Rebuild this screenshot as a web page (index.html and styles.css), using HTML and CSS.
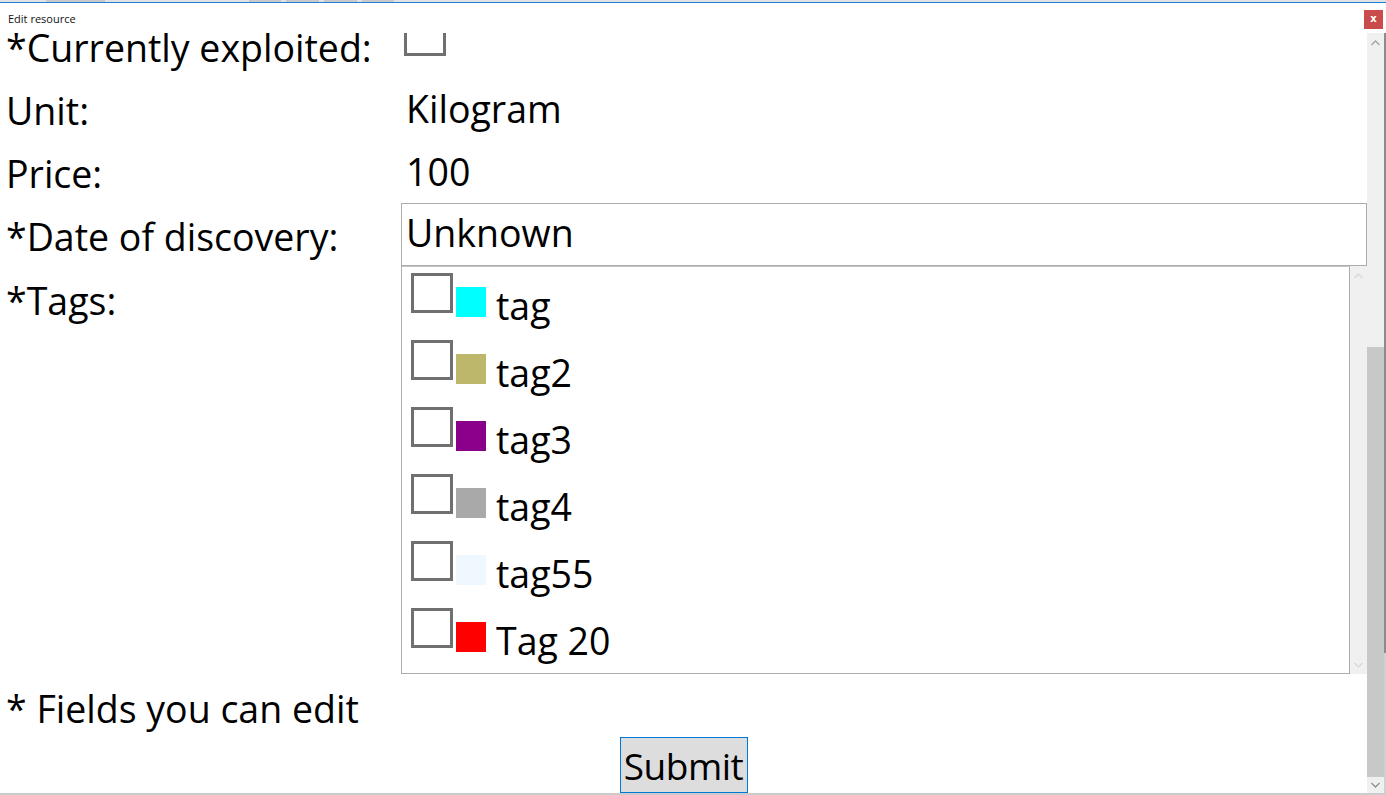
FILE: index.html
```html
<!DOCTYPE html>
<html>
<head>
<meta charset="utf-8">
<title>Edit resource</title>
<link rel="stylesheet" href="styles.css">
</head>
<body>
<div class="window">
  <div class="topstrip"></div>
  <div class="accent"></div>
  <div class="titlebar">
    <span class="title">Edit resource</span>
    <span class="close">x</span>
  </div>
  <div class="body">
    <div class="viewport">
      <div class="form">
        <div class="label row-exploited">*Currently exploited:</div>
        <div class="value row-exploited"><span class="check check-main"></span></div>

        <div class="label row-std">Unit:</div>
        <div class="value row-std text-value">Kilogram</div>

        <div class="label row-std">Price:</div>
        <div class="value row-std text-value">100</div>

        <div class="label row-date">*Date of discovery:</div>
        <div class="value row-date"><div class="textbox">Unknown</div></div>

        <div class="label row-tags tags-label">*Tags:</div>
        <div class="value row-tags">
          <div class="listbox">
            <div class="listpanel">
              <div class="tag"><span class="check"></span><span class="swatch sw-cyan"></span><span class="tagname">tag</span></div>
              <div class="tag"><span class="check"></span><span class="swatch sw-khaki"></span><span class="tagname">tag2</span></div>
              <div class="tag"><span class="check"></span><span class="swatch sw-magenta"></span><span class="tagname">tag3</span></div>
              <div class="tag"><span class="check"></span><span class="swatch sw-gray"></span><span class="tagname">tag4</span></div>
              <div class="tag"><span class="check"></span><span class="swatch sw-alice"></span><span class="tagname">tag55</span></div>
              <div class="tag"><span class="check"></span><span class="swatch sw-red"></span><span class="tagname">Tag 20</span></div>
            </div>
            <div class="innerscroll">
              <svg class="chev" width="9" height="6" viewBox="0 0 9 6"><polyline points="0.5,5 4.5,1 8.5,5" fill="none" stroke="#d6d6d6" stroke-width="1.2"/></svg>
              <svg class="chev" width="9" height="6" viewBox="0 0 9 6"><polyline points="0.5,1 4.5,5 8.5,1" fill="none" stroke="#d6d6d6" stroke-width="1.2"/></svg>
            </div>
          </div>
        </div>

        <div class="fields">* Fields you can edit</div>
        <div class="submitrow"><button class="submit">Submit</button></div>
      </div>
    </div>
    <div class="scrollbar">
      <div class="sb-btn sb-up">
        <svg width="9" height="6" viewBox="0 0 9 6"><polyline points="0.5,5 4.5,1 8.5,5" fill="none" stroke="#a3a3a3" stroke-width="1.3"/></svg>
      </div>
      <div class="sb-track"><div class="sb-thumb"></div></div>
      <div class="sb-btn sb-down">
        <svg width="9" height="6" viewBox="0 0 9 6"><polyline points="0.5,1 4.5,5 8.5,1" fill="none" stroke="#8f8f8f" stroke-width="1.3"/></svg>
      </div>
    </div>
    <div class="edge"></div>
  </div>
  <div class="bottomline"></div>
</div>
</body>
</html>
```
FILE: styles.css
```css
html, body {
  margin: 0;
  padding: 0;
  background: #ffffff;
}

body {
  width: 1386px;
  height: 795px;
  overflow: hidden;
  font-family: "Open Sans", "Noto Sans", sans-serif;
  color: #000000;
}

.window {
  display: flex;
  flex-direction: column;
  width: 1386px;
  height: 795px;
}

.topstrip {
  height: 2px;
  background: linear-gradient(to right,
    #e2e2e2 0, #e2e2e2 46px,
    #c9c9c9 46px, #c9c9c9 105px,
    #e2e2e2 105px, #e2e2e2 249px,
    #c9c9c9 249px, #c9c9c9 281px,
    #e2e2e2 281px, #e2e2e2 286px,
    #c9c9c9 286px, #c9c9c9 319px,
    #e2e2e2 319px, #e2e2e2 324px,
    #c9c9c9 324px, #c9c9c9 357px,
    #e2e2e2 357px, #e2e2e2 362px,
    #c9c9c9 362px, #c9c9c9 394px,
    #e2e2e2 394px);
}

.accent {
  height: 1px;
  background: #1a80d6;
}

.titlebar {
  height: 30px;
  display: flex;
  justify-content: space-between;
  align-items: flex-start;
  box-sizing: border-box;
  position: relative;
  z-index: 1;
  background: #ffffff;
}

.title {
  font-size: 11px;
  line-height: 15px;
  padding-top: 8px;
  padding-left: 8px;
  color: #111;
}

.close {
  width: 19px;
  height: 19px;
  margin-top: 7px;
  margin-right: 3px;
  background: #c94b4b;
  color: #ffffff;
  font-family: "DejaVu Sans", sans-serif;
  font-weight: bold;
  font-size: 10px;
  line-height: 17px;
  text-align: center;
}

.body {
  display: flex;
  height: 760px;
}

.viewport {
  width: 1367px;
  height: 760px;
  overflow: hidden;
  display: flex;
  flex-direction: column;
  justify-content: flex-end;
}

.form {
  flex-shrink: 0;
  display: grid;
  grid-template-columns: 401px 966px;
  font-size: 37.5px;
  line-height: 51px;
}

.label {
  padding-left: 6px;
  padding-top: 7.5px;
  box-sizing: border-box;
  white-space: nowrap;
}

.value {
  box-sizing: border-box;
}

.row-exploited { height: 63px; }
.row-std { height: 63px; }
.row-date { height: 63px; }
.row-tags { height: 408px; }

.text-value {
  padding-top: 6px;
  padding-left: 5px;
}

.check {
  display: block;
  width: 42px;
  height: 40px;
  border: 3px solid #707070;
  box-sizing: border-box;
  background: #ffffff;
  flex-shrink: 0;
}

.check-main {
  height: 42px;
  margin-left: 3px;
}

.textbox {
  height: 63px;
  border: 1px solid #acacac;
  box-sizing: border-box;
  padding-top: 2.5px;
  padding-left: 4px;
}

.tags-label {
  padding-top: 9px;
}

.listbox {
  display: flex;
  height: 408px;
}

.listpanel {
  width: 949px;
  height: 408px;
  box-sizing: border-box;
  border: 1px solid #acacac;
  border-top-color: #c4c4c4;
  padding-top: 6px;
  padding-left: 9px;
}

.tag {
  display: flex;
  align-items: flex-start;
  height: 67px;
}

.swatch {
  width: 30px;
  height: 30px;
  margin-top: 14px;
  margin-left: 3px;
  flex-shrink: 0;
}

.sw-cyan { background: #00ffff; }
.sw-khaki { background: #bdb76b; }
.sw-magenta { background: #8b008b; }
.sw-gray { background: #a9a9a9; }
.sw-alice { background: #f0f8ff; }
.sw-red { background: #ff0000; }

.tagname {
  margin-left: 10px;
  margin-top: 6.5px;
}

.innerscroll {
  width: 17px;
  height: 408px;
  background: #f0f0f0;
  display: flex;
  flex-direction: column;
  justify-content: space-between;
  align-items: center;
  padding: 7px 0 6px;
  box-sizing: border-box;
}

.chev {
  display: block;
}

.fields {
  grid-column: 1 / 3;
  height: 63px;
  padding-top: 8.5px;
  padding-left: 6px;
  box-sizing: border-box;
}

.submitrow {
  grid-column: 1 / 3;
  height: 56px;
  display: flex;
  justify-content: center;
}

.submit {
  width: 128px;
  height: 56px;
  box-sizing: border-box;
  margin: 0;
  padding: 3px 0 0;
  border: 1px solid #0078d7;
  border-radius: 0;
  background: #dddddd;
  font-family: "Open Sans", "Noto Sans", sans-serif;
  font-size: 37px;
  letter-spacing: -0.5px;
  line-height: 50px;
  color: #000000;
  align-self: flex-start;
  display: flex;
  justify-content: center;
  align-items: flex-start;
  overflow: hidden;
}

.scrollbar {
  width: 17px;
  height: 760px;
  background: #f0f0f0;
  display: flex;
  flex-direction: column;
}

.sb-btn {
  display: flex;
  align-items: center;
  justify-content: center;
}

.sb-up { height: 17px; padding-top: 2px; box-sizing: border-box; }
.sb-down { height: 16px; }

.sb-track {
  flex: 1;
  display: flex;
  flex-direction: column;
  justify-content: flex-end;
}

.sb-thumb {
  height: 430px;
  background: #c8c8c8;
}

.edge {
  width: 2px;
  height: 760px;
  background: linear-gradient(to bottom, #8c8c8c 0, #8c8c8c 620px, #d0d0d0 620px);
}

.bottomline {
  height: 2px;
  background: #cccccc;
}
```
